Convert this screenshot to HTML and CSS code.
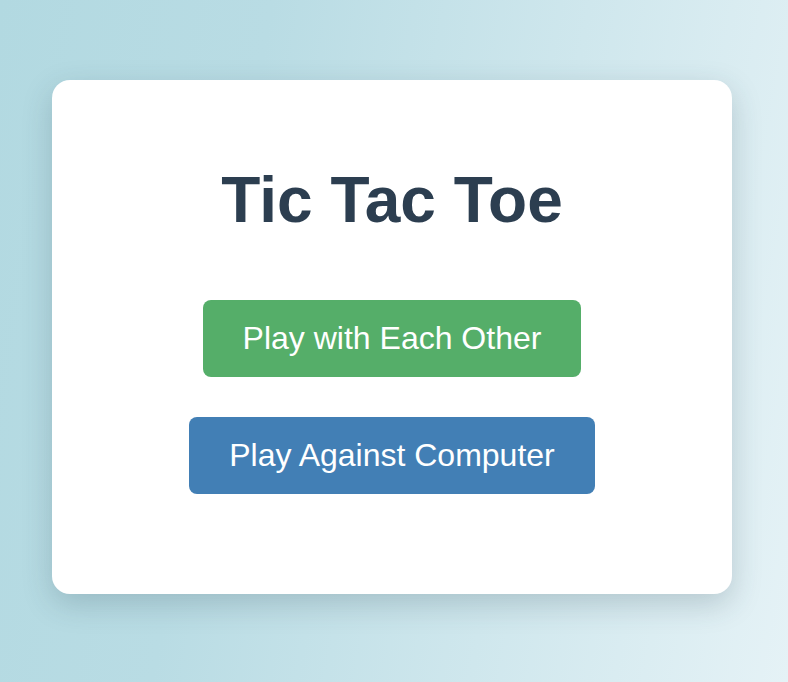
FILE: index.html
```html
<!DOCTYPE html>
<html lang="en">
<head>
<meta charset="utf-8">
<title>Tic Tac Toe</title>
<link rel="stylesheet" href="styles.css">
</head>
<body>
<main class="page">
  <section class="card">
    <h1 class="title">Tic Tac Toe</h1>
    <div class="menu">
      <button class="btn btn-green" type="button">Play with Each Other</button>
      <button class="btn btn-blue" type="button">Play Against Computer</button>
    </div>
  </section>
</main>
</body>
</html>
```

FILE: styles.css
```css
html, body {
  margin: 0;
  padding: 0;
  height: 100%;
}

body {
  font-family: "Liberation Sans", Arial, Helvetica, sans-serif;
  background: linear-gradient(100deg, #b2d9e1 0%, #b9dce4 30%, #e5f2f6 100%);
  overflow: hidden;
}

.page {
  box-sizing: border-box;
  height: 100%;
  padding: 80px 56px 0 52px;
  display: flex;
  justify-content: center;
  align-items: flex-start;
}

.card {
  width: 680px;
  height: 514px;
  box-sizing: border-box;
  background: #ffffff;
  border-radius: 18px;
  box-shadow: 0 10px 30px rgba(40, 70, 80, 0.22);
  padding-top: 84px;
  display: flex;
  flex-direction: column;
  align-items: center;
}

.title {
  margin: 0;
  font-size: 64px;
  font-weight: 700;
  line-height: 73px;
  color: #2c3e50;
}

.menu {
  margin-top: 63px;
  display: flex;
  flex-direction: column;
  align-items: center;
  gap: 40px;
}

.btn {
  font-family: "Liberation Sans", Arial, Helvetica, sans-serif;
  font-size: 32px;
  line-height: 37px;
  color: #ffffff;
  border: none;
  border-radius: 8px;
  padding: 20px 40px;
  cursor: pointer;
}

.btn-green {
  background: #55ae69;
}

.btn-blue {
  background: #427fb5;
}
```
